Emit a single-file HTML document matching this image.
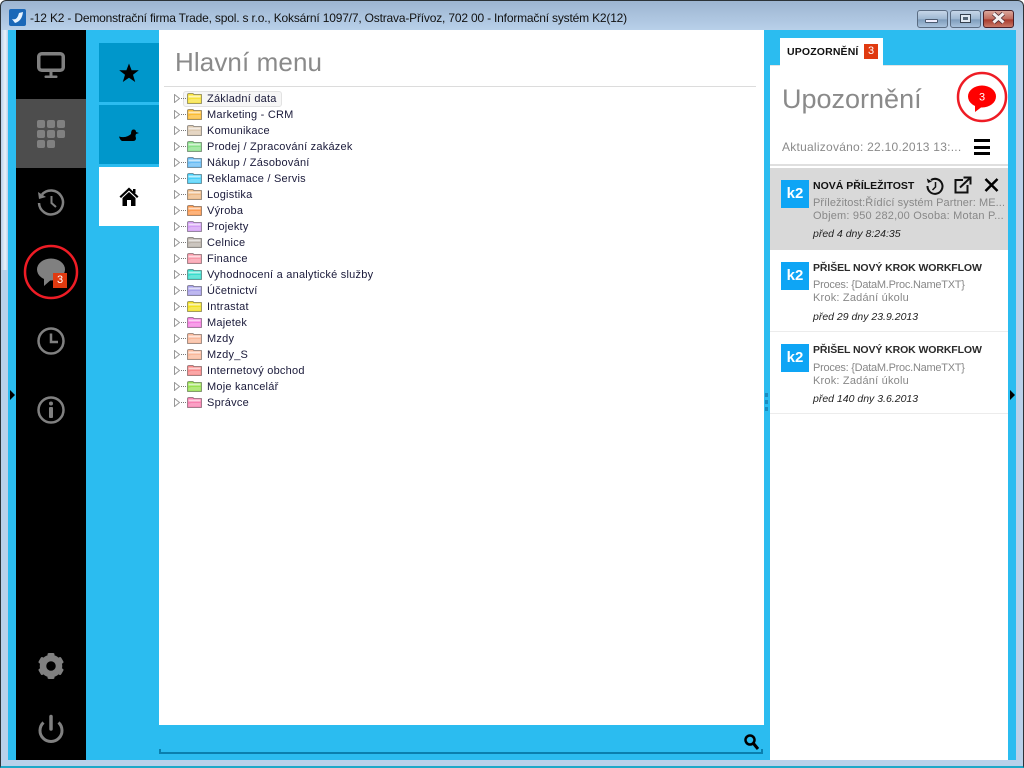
<!DOCTYPE html>
<html><head><meta charset="utf-8"><style>
html,body{margin:0;padding:0;background:#fff;overflow:hidden}
#w{position:relative;width:1024px;height:768px;overflow:hidden;font-family:"Liberation Sans",sans-serif}
#w div,#w svg,#w span.a{position:absolute}
.t{left:207px;margin-top:1px;font-size:11px;line-height:14px;color:#1a1a3a;letter-spacing:.23px;white-space:nowrap}
.tri{left:174px;width:6px;height:9px}
.dot{left:181px;width:5px;height:0;border-top:1px dotted #777}
.fo{left:187px;margin-top:1px;width:15px;height:11px}
.nt{left:813px;margin-top:1px;font-size:10.5px;font-weight:bold;color:#2a2a2a;white-space:nowrap;line-height:14px;letter-spacing:-.1px}
.ns{left:813px;font-size:11px;color:#888;white-space:nowrap;line-height:14px;letter-spacing:.2px}
.ni{left:813px;font-size:10.5px;font-style:italic;color:#222;white-space:nowrap;line-height:14px}
.k{left:781px;width:28px;height:28px;background:#0ea5f5;color:#fff;font-weight:bold;font-size:15px;line-height:28px;text-align:center}
.ic{left:0;top:0}
</style></head><body><div id="w">
<svg width="0" height="0"><defs>
<g id="f"><path d="M.5 1.500Q.5 .5 2 .5H6L7 1.500H14.500V10.500H.5Z" fill="currentColor" stroke="#000" stroke-opacity=".35"/><path d="M1.500 2.500H13.500V4.500H1.500Z" fill="#fff" fill-opacity=".65"/><path d="M4 6H13.500V9.500H1.500V7Z" fill="#fff" fill-opacity=".25"/></g>
<path id="tr" d="M.5.5L5.500 4.500L.5 8.500Z" fill="#fff" stroke="#999"/>
</defs></svg>

<!-- window frame -->
<div style="left:0;top:0;width:1024px;height:768px;box-sizing:border-box;background:linear-gradient(#9db5d1 0,#b9d1ea 30px);border:1px solid #2c3338;border-radius:6px 6px 0 0;border-bottom:2px solid #1fa8c8"></div>
<div style="left:1px;top:30px;width:7px;height:240px;background:linear-gradient(90deg,#b9d1ea 0,#e8f0f8 60%,#b9d1ea 100%)"></div>
<svg style="left:9px;top:9px" width="17" height="17"><rect width="17" height="17" rx="2" fill="#1a68b8"/><path d="M3 10Q8 12 10 4L14 3Q13 12 6 14Z" fill="#e8f4ff"/></svg>
<div style="left:30px;top:10px;font-size:12px;line-height:16px;color:#111;white-space:nowrap;letter-spacing:-.185px">-12 K2 - Demonstrační firma Trade, spol. s r.o., Koksární 1097/7, Ostrava-Přívoz, 702 00 - Informační systém K2(12)</div>
<div style="left:917px;top:10px;width:29px;height:16px;border:1px solid #5a6c82;border-radius:3px;background:linear-gradient(#c6d6e8,#9fb8d2 50%,#7f9dbc 55%,#a8c2dc)"></div>
<div style="left:925px;top:19px;box-sizing:content-box;width:11px;height:2px;background:#eef;border:1px solid #4a5a70;border-radius:1px"></div>
<div style="left:950px;top:10px;width:29px;height:16px;border:1px solid #5a6c82;border-radius:3px;background:linear-gradient(#c6d6e8,#9fb8d2 50%,#7f9dbc 55%,#a8c2dc)"></div>
<div style="left:960px;top:14px;width:9px;height:7px;border:1px solid #34404e;background:#dfe8f2;box-shadow:inset 0 0 0 2px #dfe8f2,inset 0 0 0 4px #567"></div>
<div style="left:983px;top:10px;width:29px;height:16px;border:1px solid #4a2028;border-radius:3px;background:linear-gradient(#dba79c,#c06a5c 50%,#a83a2c 55%,#c87868)"></div>
<svg style="left:991px;top:12px" width="15" height="12"><path d="M2.500 1.500L12.500 10.500M12.500 1.500L2.500 10.500" stroke="#4a2830" stroke-width="4.500"/><path d="M2.500 1.500L12.500 10.500M12.500 1.500L2.500 10.500" stroke="#f4f0f0" stroke-width="3"/></svg>

<!-- client -->
<div style="left:8px;top:30px;width:1008px;height:730px;background:#2bbcf0"></div>
<div style="left:16px;top:30px;width:70px;height:730px;background:#000"></div>
<div style="left:16px;top:99px;width:70px;height:69px;background:#4d4d4d"></div>

<!-- sidebar icons -->
<svg style="left:36px;top:51px" width="30" height="28"><rect x="2.750" y="2.750" width="24.500" height="16.500" rx="3" fill="none" stroke="#808080" stroke-width="3.500"/><rect x="13.500" y="20" width="3" height="5" fill="#808080"/><rect x="8.500" y="24.500" width="13" height="2.500" rx="1" fill="#808080"/><circle cx="15" cy="19.500" r="1.500" fill="#808080"/></svg>
<svg style="left:36px;top:119px" width="30" height="30" fill="#808080"><rect x="1" y="1" width="8" height="8" rx="2"/><rect x="11" y="1" width="8" height="8" rx="2"/><rect x="21" y="1" width="8" height="8" rx="2"/><rect x="1" y="11" width="8" height="8" rx="2"/><rect x="11" y="11" width="8" height="8" rx="2"/><rect x="21" y="11" width="8" height="8" rx="2"/><rect x="1" y="21" width="8" height="8" rx="2"/><rect x="11" y="21" width="8" height="8" rx="2"/></svg>
<svg style="left:36px;top:189px" width="30" height="28" fill="none" stroke="#808080"><path d="M6 5.500A12 12 0 1 1 3 14" stroke-width="2.500"/><path d="M2 3L3 10L10 8Z" fill="#808080" stroke="none"/><path d="M15.500 7V14L20 18" stroke-width="2"/></svg>
<svg style="left:36px;top:257px" width="30" height="30"><ellipse cx="15" cy="12.500" rx="14" ry="11" fill="#808080"/><path d="M8 19V29L17 21Z" fill="#808080"/></svg>
<svg style="left:37px;top:327px" width="28" height="28" fill="none" stroke="#808080"><circle cx="14" cy="14" r="12.500" stroke-width="2.500"/><path d="M14 6.500V15H21" stroke-width="2.500"/></svg>
<svg style="left:37px;top:396px" width="28" height="28" fill="none" stroke="#808080"><circle cx="14" cy="14" r="12.500" stroke-width="2.500"/><circle cx="14" cy="7.500" r="2" fill="#808080" stroke="none"/><rect x="12" y="11" width="4" height="11" rx="1" fill="#808080" stroke="none"/></svg>
<svg style="left:38px;top:652px" width="26" height="28"><circle cx="13" cy="14" r="8" fill="none" stroke="#808080" stroke-width="6.500"/><g fill="#808080"><rect x="9.500" y="1" width="7" height="5" rx="1.500"/><rect x="9.500" y="22" width="7" height="5" rx="1.500"/><rect x="9.500" y="1" width="7" height="5" rx="1.500" transform="rotate(60 13 14)"/><rect x="9.500" y="1" width="7" height="5" rx="1.500" transform="rotate(120 13 14)"/><rect x="9.500" y="1" width="7" height="5" rx="1.500" transform="rotate(240 13 14)"/><rect x="9.500" y="1" width="7" height="5" rx="1.500" transform="rotate(300 13 14)"/></g></svg>
<svg style="left:37px;top:714px" width="28" height="30" fill="none" stroke="#808080" stroke-width="3"><path d="M6.500 8.500A11 11 0 1 0 21.500 8.500"/><path d="M14 2.500V15" stroke-width="3.500" stroke-linecap="round"/></svg>
<div style="left:53px;top:273px;width:14px;height:15px;background:#e03a10;color:#fff;font-size:11px;line-height:15px;text-align:center">3</div>
<svg style="left:22px;top:243px" width="58" height="58"><circle cx="29" cy="29" r="26" fill="none" stroke="#ee1c25" stroke-width="2.500"/></svg>
<svg style="left:10px;top:390px" width="5" height="10"><path d="M0 0L5 5L0 10Z" fill="#000"/></svg>

<!-- tiles -->
<div style="left:99px;top:43px;width:60px;height:59px;background:#0097cb"></div>
<div style="left:99px;top:105px;width:60px;height:59px;background:#0097cb"></div>
<div style="left:99px;top:167px;width:60px;height:59px;background:#fff"></div>
<svg style="left:119px;top:63px" width="20" height="20"><path d="M10 .5L12.600 7.300H19.800L14 11.800L16.200 19L10 14.700L3.800 19L6 11.800L.2 7.300H7.400Z" fill="#000"/></svg>
<svg style="left:119px;top:129px" width="20" height="13"><path d="M0 7.500Q5 9 9 7Q11 6 12 5Q12 .5 14.500 .5Q17 .5 17 3L20 4L17 5Q16 7 17 9Q17 12 14 12H3Q1 11 0 7.500Z" fill="#000"/></svg>
<svg style="left:119px;top:187px" width="20" height="20"><path d="M10 .5L19.500 9.500L18 11L10 3.500L2 11L.5 9.500Z" fill="#000"/><path d="M3.500 11L10 5L16.500 11V19H12V13H8V19H3.500Z" fill="#000"/><rect x="14" y="2" width="2.500" height="4" fill="#000"/></svg>

<!-- main -->
<div style="left:159px;top:30px;width:605px;height:695px;background:#fff"></div>
<div style="left:175px;top:46px;font-size:26px;line-height:32px;color:#8a8a8a;white-space:nowrap;letter-spacing:.1px">Hlavní menu</div>
<div style="left:164px;top:86px;width:592px;height:1px;background:#dcdcdc"></div>
<div style="left:183px;top:91px;width:97px;height:14px;border:1px solid #e2e2e2;border-radius:3px;background:#f6f6f6"></div>

<svg class="tri" style="top:94px"><use href="#tr"/></svg><div class="dot" style="top:98px"></div><svg class="fo" style="top:92px;color:#f7e23a"><use href="#f"/></svg><div class="t" style="top:91px">Základní data</div>
<svg class="tri" style="top:110px"><use href="#tr"/></svg><div class="dot" style="top:114px"></div><svg class="fo" style="top:108px;color:#fbbc34"><use href="#f"/></svg><div class="t" style="top:107px">Marketing - CRM</div>
<svg class="tri" style="top:126px"><use href="#tr"/></svg><div class="dot" style="top:130px"></div><svg class="fo" style="top:124px;color:#dcc9b0"><use href="#f"/></svg><div class="t" style="top:123px">Komunikace</div>
<svg class="tri" style="top:142px"><use href="#tr"/></svg><div class="dot" style="top:146px"></div><svg class="fo" style="top:140px;color:#88e088"><use href="#f"/></svg><div class="t" style="top:139px">Prodej / Zpracování zakázek</div>
<svg class="tri" style="top:158px"><use href="#tr"/></svg><div class="dot" style="top:162px"></div><svg class="fo" style="top:156px;color:#68bcf4"><use href="#f"/></svg><div class="t" style="top:155px">Nákup / Zásobování</div>
<svg class="tri" style="top:174px"><use href="#tr"/></svg><div class="dot" style="top:178px"></div><svg class="fo" style="top:172px;color:#48d0fa"><use href="#f"/></svg><div class="t" style="top:171px">Reklamace / Servis</div>
<svg class="tri" style="top:190px"><use href="#tr"/></svg><div class="dot" style="top:194px"></div><svg class="fo" style="top:188px;color:#ecb884"><use href="#f"/></svg><div class="t" style="top:187px">Logistika</div>
<svg class="tri" style="top:206px"><use href="#tr"/></svg><div class="dot" style="top:210px"></div><svg class="fo" style="top:204px;color:#fc9a50"><use href="#f"/></svg><div class="t" style="top:203px">Výroba</div>
<svg class="tri" style="top:222px"><use href="#tr"/></svg><div class="dot" style="top:226px"></div><svg class="fo" style="top:220px;color:#d29cf4"><use href="#f"/></svg><div class="t" style="top:219px">Projekty</div>
<svg class="tri" style="top:238px"><use href="#tr"/></svg><div class="dot" style="top:242px"></div><svg class="fo" style="top:236px;color:#bab2aa"><use href="#f"/></svg><div class="t" style="top:235px">Celnice</div>
<svg class="tri" style="top:254px"><use href="#tr"/></svg><div class="dot" style="top:258px"></div><svg class="fo" style="top:252px;color:#f898a8"><use href="#f"/></svg><div class="t" style="top:251px">Finance</div>
<svg class="tri" style="top:270px"><use href="#tr"/></svg><div class="dot" style="top:274px"></div><svg class="fo" style="top:268px;color:#38dccc"><use href="#f"/></svg><div class="t" style="top:267px">Vyhodnocení a analytické služby</div>
<svg class="tri" style="top:286px"><use href="#tr"/></svg><div class="dot" style="top:290px"></div><svg class="fo" style="top:284px;color:#a8a0ea"><use href="#f"/></svg><div class="t" style="top:283px">Účetnictví</div>
<svg class="tri" style="top:302px"><use href="#tr"/></svg><div class="dot" style="top:306px"></div><svg class="fo" style="top:300px;color:#f2e020"><use href="#f"/></svg><div class="t" style="top:299px">Intrastat</div>
<svg class="tri" style="top:318px"><use href="#tr"/></svg><div class="dot" style="top:322px"></div><svg class="fo" style="top:316px;color:#f47ee0"><use href="#f"/></svg><div class="t" style="top:315px">Majetek</div>
<svg class="tri" style="top:334px"><use href="#tr"/></svg><div class="dot" style="top:338px"></div><svg class="fo" style="top:332px;color:#f9b89a"><use href="#f"/></svg><div class="t" style="top:331px">Mzdy</div>
<svg class="tri" style="top:350px"><use href="#tr"/></svg><div class="dot" style="top:354px"></div><svg class="fo" style="top:348px;color:#f9b89a"><use href="#f"/></svg><div class="t" style="top:347px">Mzdy_S</div>
<svg class="tri" style="top:366px"><use href="#tr"/></svg><div class="dot" style="top:370px"></div><svg class="fo" style="top:364px;color:#f88888"><use href="#f"/></svg><div class="t" style="top:363px">Internetový obchod</div>
<svg class="tri" style="top:382px"><use href="#tr"/></svg><div class="dot" style="top:386px"></div><svg class="fo" style="top:380px;color:#98e050"><use href="#f"/></svg><div class="t" style="top:379px">Moje kancelář</div>
<svg class="tri" style="top:398px"><use href="#tr"/></svg><div class="dot" style="top:402px"></div><svg class="fo" style="top:396px;color:#f880b0"><use href="#f"/></svg><div class="t" style="top:395px">Správce</div>

<!-- search -->
<div style="left:159px;top:752px;width:604px;height:2px;background:#0a7fae"></div>
<div style="left:159px;top:749px;width:2px;height:4px;background:#0a7fae"></div>
<div style="left:761px;top:749px;width:2px;height:4px;background:#0a7fae"></div>
<svg style="left:743px;top:733px" width="17" height="18" fill="none" stroke="#000"><circle cx="7" cy="7" r="4.500" stroke-width="2.500"/><path d="M10.500 10.500L15 16" stroke-width="3"/></svg>

<!-- splitter -->
<div style="left:765px;top:393px;width:3px;height:4px;background:#1a8cc0"></div>
<div style="left:765px;top:400px;width:3px;height:4px;background:#1a8cc0"></div>
<div style="left:765px;top:407px;width:3px;height:4px;background:#1a8cc0"></div>

<!-- right panel -->
<div style="left:780px;top:38px;width:103px;height:28px;background:#fff"></div>
<div style="left:770px;top:65px;width:238px;height:695px;background:#fff;border-top:1px solid #e4e4e4;box-sizing:border-box"></div>
<div style="left:780px;top:65px;width:103px;height:2px;background:#fff"></div>
<div style="left:787px;top:45px;font-size:10.5px;font-weight:bold;line-height:14px;color:#111;white-space:nowrap;letter-spacing:.15px">UPOZORNĚNÍ</div>
<div style="left:864px;top:44px;width:14px;height:15px;background:#e03a10;color:#fff;font-size:11px;line-height:15px;text-align:center">3</div>
<div style="left:782px;top:83px;font-size:27px;line-height:32px;color:#8a8a8a;white-space:nowrap">Upozornění</div>
<svg style="left:955px;top:70px" width="54" height="54"><circle cx="27" cy="27" r="24" fill="none" stroke="#ee1c25" stroke-width="2.500"/><ellipse cx="27" cy="26.500" rx="14" ry="11" fill="#f00"/><path d="M20 34L20 42L28 36Z" fill="#f00"/><text x="27" y="30.500" font-family="Liberation Sans" font-size="11" fill="#fff" text-anchor="middle">3</text></svg>
<div style="left:782px;top:140px;font-size:12px;line-height:15px;color:#8a8a8a;white-space:nowrap;letter-spacing:.25px">Aktualizováno: 22.10.2013 13:...</div>
<div style="left:974px;top:139px;width:16px;height:3px;background:#000"></div>
<div style="left:974px;top:146px;width:16px;height:3px;background:#000"></div>
<div style="left:974px;top:152px;width:16px;height:3px;background:#000"></div>
<div style="left:770px;top:164px;width:238px;height:2px;background:#dfdfdf"></div>

<!-- item 1 -->
<div style="left:770px;top:168px;width:238px;height:82px;background:#d9d9d9"></div>
<div class="k" style="top:180px">k2</div>
<div class="nt" style="top:178px;color:#111;letter-spacing:0">NOVÁ PŘÍLEŽITOST</div>
<div class="ns" style="top:196px;width:191px;overflow:hidden;letter-spacing:.08px">Příležitost:Řídící systém Partner: ME...</div>
<div class="ns" style="top:209px;width:191px;overflow:hidden">Objem: 950 282,00 Osoba: Motan P...</div>
<div class="ni" style="top:227px">před 4 dny 8:24:35</div>
<svg style="left:926px;top:177px" width="18" height="18" fill="none" stroke="#111"><path d="M5 3A7.500 7.500 0 1 1 1.500 9" stroke-width="2"/><path d="M9.500 5V10L6.500 13" stroke-width="1.500"/><path d="M.8 1.500L2 6L6 4.500Z" fill="#111" stroke="none"/></svg>
<svg style="left:954px;top:176px" width="18" height="18" fill="none" stroke="#111" stroke-width="2"><path d="M9 4H1.500V16.500H13.500V9"/><path d="M6 11.500L16 2M9.500 1.500H16.500V8.500"/></svg>
<svg style="left:984px;top:178px" width="15" height="14"><path d="M1.500 1L13.500 13M13.500 1L1.500 13" stroke="#000" stroke-width="2.500"/></svg>

<!-- item 2 -->
<div class="k" style="top:262px">k2</div>
<div class="nt" style="top:260px">PŘIŠEL NOVÝ KROK WORKFLOW</div>
<div class="ns" style="top:278px;letter-spacing:-.26px">Proces: {DataM.Proc.NameTXT}</div>
<div class="ns" style="top:291px">Krok: Zadání úkolu</div>
<div class="ni" style="top:310px">před 29 dny 23.9.2013</div>
<div style="left:770px;top:331px;width:238px;height:1px;background:#ececec"></div>

<!-- item 3 -->
<div class="k" style="top:344px">k2</div>
<div class="nt" style="top:342px">PŘIŠEL NOVÝ KROK WORKFLOW</div>
<div class="ns" style="top:361px;letter-spacing:-.26px">Proces: {DataM.Proc.NameTXT}</div>
<div class="ns" style="top:374px">Krok: Zadání úkolu</div>
<div class="ni" style="top:392px">před 140 dny 3.6.2013</div>
<div style="left:770px;top:413px;width:238px;height:1px;background:#ececec"></div>

<svg style="left:1010px;top:390px" width="5" height="10"><path d="M0 0L5 5L0 10Z" fill="#000"/></svg>
</div></body></html>
